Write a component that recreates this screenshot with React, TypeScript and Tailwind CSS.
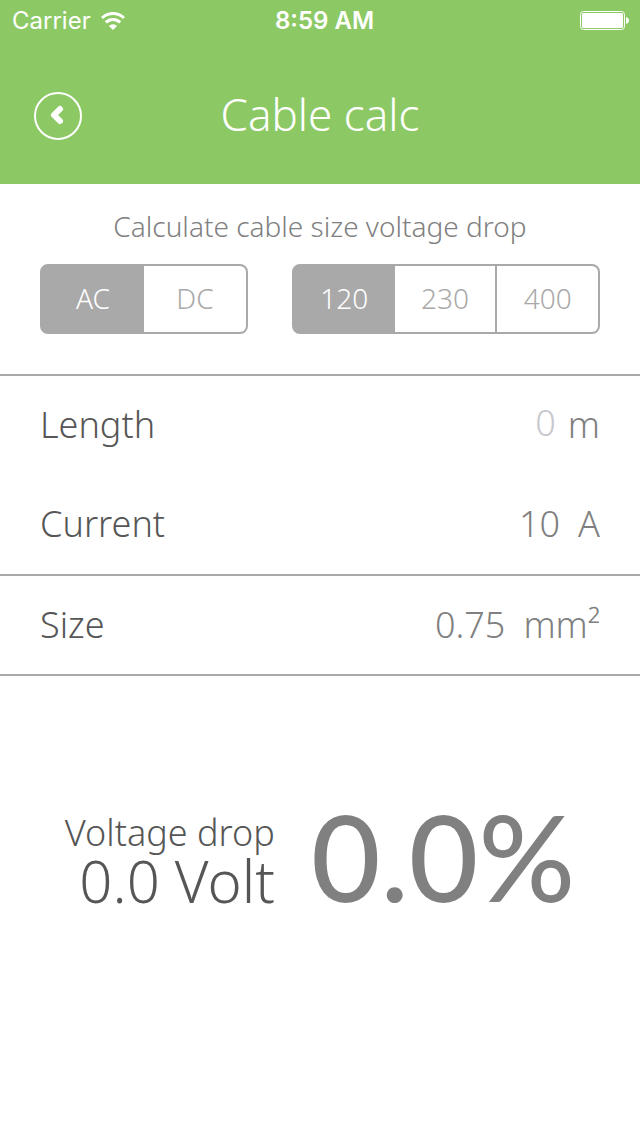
import { useState } from "react";

function WifiIcon() {
  return (
    <svg className="h-[18px] w-6" viewBox="0 0 24 18" fill="none" stroke="white" strokeWidth="3" aria-hidden="true">
      <path d="M1 6A15.6 15.6 0 0 1 23 6" />
      <path d="M4.8 10.4A10.2 10.2 0 0 1 19.2 10.4" />
      <path d="M12 18L7.9 14A5.8 5.8 0 0 1 16.1 14Z" fill="white" stroke="none" />
    </svg>
  );
}

function BatteryIcon() {
  return (
    <svg className="h-5 w-[49px]" viewBox="0 0 49 20" fill="white" aria-hidden="true">
      <rect x="0.5" y="0.5" width="44" height="18" rx="3" fill="none" stroke="white" />
      <rect x="2" y="2" width="41" height="15" rx="1.5" />
      <path d="M46 6.2C47.8 6.4 49 7.8 49 9.5S47.8 12.6 46 12.8Z" />
    </svg>
  );
}

type SegmentsProps = {
  label: string;
  options: string[];
  value: string;
  onChange: (value: string) => void;
};

function Segments({ label, options, value, onChange }: SegmentsProps) {
  return (
    <div
      role="group"
      aria-label={label}
      className="flex h-[70px] divide-x-2 divide-[#a9a9a9] overflow-hidden rounded-lg border-2 border-[#a9a9a9] bg-[#a9a9a9]"
    >
      {options.map((option) => (
        <button
          key={option}
          type="button"
          aria-pressed={option === value}
          onClick={() => onChange(option)}
          className={
            option === value
              ? "flex-1 border-r-0! bg-[#a9a9a9] pb-0.5 text-[28px] text-white"
              : "flex-1 bg-white pb-0.5 text-[28px] text-[#a9a9a9]"
          }
        >
          {option}
        </button>
      ))}
    </div>
  );
}

export default function App() {
  const [current, setCurrent] = useState("AC");
  const [voltage, setVoltage] = useState("120");

  return (
    <div className="min-h-screen bg-white font-['Noto_Sans',sans-serif] font-light text-[#565656]">
      <header className="bg-[#8cc965] text-white">
        <div className="grid h-[42px] grid-cols-[53fr_50fr_51fr] items-center pr-[11px] pl-3 font-['Inter',sans-serif] text-2xl">
          <div className="flex items-center gap-2.5 font-normal">
            <span>Carrier</span>
            <WifiIcon />
          </div>
          <time className="text-center font-semibold">8:59 AM</time>
          <div className="flex justify-end">
            <BatteryIcon />
          </div>
        </div>
        <div className="grid h-[142px] grid-cols-[48px_1fr_48px] items-center px-[34px] pt-1.5">
          <button
            type="button"
            aria-label="Back"
            className="flex size-12 items-center justify-center rounded-full border-2 border-white"
          >
            <svg className="size-6" viewBox="0 0 24 24" fill="none" stroke="white" strokeWidth="6" strokeLinecap="round" strokeLinejoin="round" aria-hidden="true">
              <path d="M14 5L8 11L14 17" />
            </svg>
          </button>
          <h1 className="pb-1 text-center text-[44px] leading-[48px] font-light">Cable calc</h1>
        </div>
      </header>

      <main>
        <section className="border-b-2 border-[#a9a9a9] px-10 pt-[22px] pb-10">
          <p className="mb-[18px] text-center text-[28px] leading-10 text-[#808080]">
            Calculate cable size voltage drop
          </p>
          <div className="grid grid-cols-[52fr_77fr] gap-11">
            <Segments label="Current type" options={["AC", "DC"]} value={current} onChange={setCurrent} />
            <Segments label="Voltage" options={["120", "230", "400"]} value={voltage} onChange={setVoltage} />
          </div>
        </section>

        <form className="text-4xl">
          <div className="flex h-[98px] items-center justify-between px-10">
            <label htmlFor="length">Length</label>
            <div className="flex items-center gap-3 text-[#808080]">
              <input
                id="length"
                inputMode="decimal"
                placeholder="0"
                className="w-40 pb-1 text-right outline-none placeholder:text-[#c7c7cd]"
              />
              <span>m</span>
            </div>
          </div>
          <div className="flex h-[102px] items-center justify-between border-b-2 border-[#a9a9a9] px-10">
            <label htmlFor="current">Current</label>
            <div className="flex items-center gap-[18px] text-[#808080]">
              <input id="current" inputMode="decimal" defaultValue="10" className="w-40 text-right outline-none" />
              <span>A</span>
            </div>
          </div>
          <div className="flex h-[98px] items-center justify-between px-10">
            <label htmlFor="size">Size</label>
            <div className="flex items-center gap-[18px] text-[#808080]">
              <select id="size" defaultValue="0.75" className="appearance-none text-right outline-none">
                <option>0.75</option>
              </select>
              <span>mm²</span>
            </div>
          </div>
        </form>

        <section className="flex items-center justify-center gap-9 border-t-2 border-[#a9a9a9] px-10 pt-[116px]">
          <div className="text-right">
            <div className="text-4xl leading-[46px]">Voltage drop</div>
            <div className="text-[58px] leading-[50px]">0.0 Volt</div>
          </div>
          <output className="pb-1 font-['Lato',sans-serif] text-[120px] leading-[128px] font-medium text-[#808080]">
            0.0%
          </output>
        </section>
      </main>
    </div>
  );
}
